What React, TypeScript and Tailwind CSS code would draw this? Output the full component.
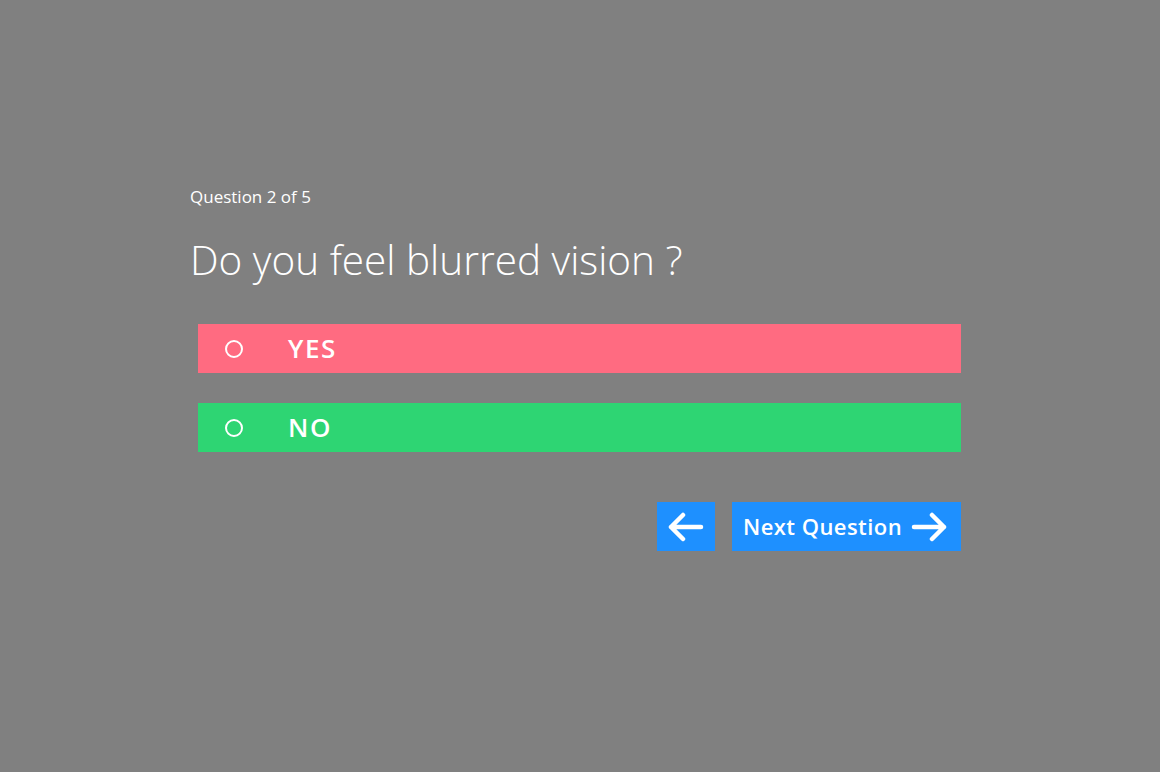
const font = { fontFamily: '"Open Sans", "Noto Sans", sans-serif' };

const Arrow = ({ dir }: { dir: "left" | "right" }) => (
  <svg width="36" height="30" viewBox="0 0 36 30" fill="none">
    {dir === "left" ? (
      <path
        d="M3 15 H33 M15 3 L3 15 L15 27"
        stroke="white"
        strokeWidth="4.5"
        strokeLinecap="round"
        strokeLinejoin="round"
      />
    ) : (
      <path
        d="M3 15 H33 M21 3 L33 15 L21 27"
        stroke="white"
        strokeWidth="4.5"
        strokeLinecap="round"
        strokeLinejoin="round"
      />
    )}
  </svg>
);

const Option = ({ label, color }: { label: string; color: string }) => (
  <div className={`flex items-center h-[49px] ml-[8px] ${color}`}>
    <span className="ml-[27px] w-[18px] h-[18px] rounded-full border-2 border-white" />
    <span className="ml-[45px] text-white text-[26px] font-semibold tracking-[0.06em]">
      {label}
    </span>
  </div>
);

export default function App() {
  return (
    <div className="w-[1160px] h-[772px] bg-[#808080] text-white" style={font}>
      <div className="ml-[190px] w-[771px] pt-[184px]">
        <p className="text-[17px]">Question 2 of 5</p>
        <h1 className="mt-[20px] text-[40.5px] font-light">
          Do you feel blurred vision ?
        </h1>
        <div className="mt-[34px] flex flex-col gap-[30px]">
          <Option label="YES" color="bg-[#ff6b81]" />
          <Option label="NO" color="bg-[#2ed573]" />
        </div>
        <div className="mt-[50px] flex justify-end gap-[17px]">
          <button className="w-[58px] h-[49px] bg-[#1e90ff] flex items-center justify-center">
            <Arrow dir="left" />
          </button>
          <button className="w-[229px] h-[49px] bg-[#1e90ff] flex items-center pl-[11px] gap-[9px]">
            <span className="text-[22px] font-semibold tracking-[0.02em]">Next Question</span>
            <Arrow dir="right" />
          </button>
        </div>
      </div>
    </div>
  );
}
